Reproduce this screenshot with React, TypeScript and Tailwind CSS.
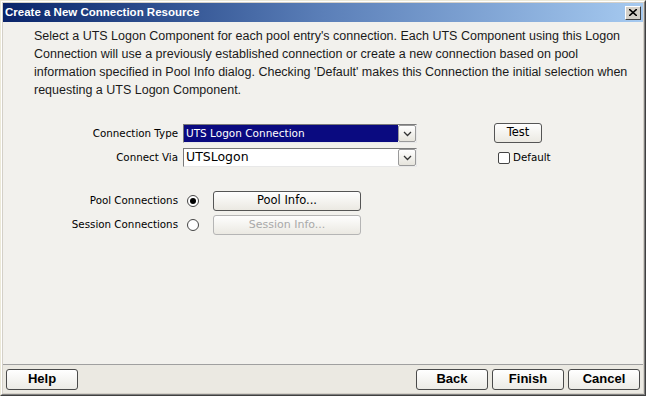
import React from "react";

const sans = "font-['DejaVu_Sans',sans-serif]";
const arial = "font-['Liberation_Sans',Arial,sans-serif]";

function Chevron() {
  return (
    <svg width="9" height="6" viewBox="0 0 9 6" className="block">
      <path d="M1 1 L4.5 4.5 L8 1" stroke="#333" strokeWidth="1.3" fill="none" />
    </svg>
  );
}

interface ComboProps {
  value: string;
  selected?: boolean;
  large?: boolean;
}

function Combo({ value, selected, large }: ComboProps) {
  return (
    <div className="flex h-[19px] w-[234px] border-t border-l border-[#7b7b7b] border-r border-b border-r-[#e8e8e8] border-b-[#e8e8e8] bg-white">
      <div
        className={`flex flex-1 items-center pl-[2px] ${sans} ${large ? "text-[12.5px]" : "text-[10.5px]"} ${
          selected ? "bg-[#0a0a80] text-white" : "bg-white text-black"
        }`}
      >
        {value}
      </div>
      <div className="flex w-[18px] items-center justify-center rounded-[2px] border border-[#9a9a9a] bg-gradient-to-b from-white to-[#e6e4dc]">
        <Chevron />
      </div>
    </div>
  );
}

function Button({
  label,
  className,
  disabled,
}: {
  label: string;
  className: string;
  disabled?: boolean;
}) {
  return (
    <div
      className={`flex items-center justify-center rounded-[3px] border ${
        disabled ? "border-[#b5b5b5] text-[#a9a9a9]" : "border-[#555] text-black"
      } bg-gradient-to-b from-[#fefefe] to-[#ebe9e2] ${sans} ${className}`}
    >
      {label}
    </div>
  );
}

function FooterButton({ label }: { label: string }) {
  return (
    <div
      className={`flex h-[21px] w-[72px] items-center justify-center rounded-[3px] border border-[#4a4a4a] bg-gradient-to-b from-white to-[#ecebe6] ${arial} text-[13px] font-bold text-black`}
    >
      {label}
    </div>
  );
}

export default function App() {
  return (
    <div className="flex h-[396px] w-[646px] flex-col border-l border-t border-r border-b border-l-[#ece9d8] border-t-[#ece9d8] border-r-[#404040] border-b-[#404040] bg-[#d4d0c8]">
      <div className="flex flex-1 flex-col border border-l-white border-t-white border-r-[#808080] border-b-[#808080] p-px">
        {/* title bar */}
        <div className="flex h-[19px] items-center justify-between bg-gradient-to-r from-[#0a246a] via-[#5b7fb8] to-[#a6caf0] pl-[2px] pr-[2px]">
          <span className={`${arial} text-[11.5px] font-bold text-white`}>Create a New Connection Resource</span>
          <div className="flex h-[14px] w-[16px] items-center justify-center border border-l-white border-t-white border-r-[#404040] border-b-[#404040] bg-[#d4d0c8]">
            <svg width="8" height="7" viewBox="0 0 8 7">
              <path d="M0 0 L8 7 M8 0 L0 7" stroke="#000" strokeWidth="1.6" />
            </svg>
          </div>
        </div>

        {/* body */}
        <div className="flex flex-1 flex-col border-b border-[#a0a0a0] bg-[#f2f1ed] pl-[31px] pt-[5px]">
          <p className={`${arial} text-[12.5px] leading-[18px] text-[#1a1a1a]`}>
            <span className="block">
              Select a UTS Logon Component for each pool entry's connection. Each UTS Component using this Logon
            </span>
            <span className="block">
              Connection will use a previously established connection or create a new connection based on pool
            </span>
            <span className="block">
              information specified in Pool Info dialog. Checking 'Default' makes this Connection the initial selection when
            </span>
            <span className="block">requesting a UTS Logon Component.</span>
          </p>

          <div className={`mt-[25px] flex ${sans} text-[10.3px] text-black`}>
            <div className="flex w-[144px] flex-col items-end gap-[5px]">
              <div className="flex h-[19px] items-center">Connection Type</div>
              <div className="flex h-[19px] items-center">Connect Via</div>
            </div>
            <div className="ml-[5px] flex flex-col gap-[5px]">
              <Combo value="UTS Logon Connection" selected />
              <Combo value="UTSLogon" large />
            </div>
            <div className="ml-[77px] -mt-[1px] flex flex-col gap-[5px]">
              <Button label="Test" className="h-[20px] w-[48px] text-[11.5px]" />
              <div className="flex h-[19px] items-center gap-[3px] pl-[4px]">
                <div className="h-[12px] w-[12px] rounded-[2px] border border-[#444] bg-white" />
                <span>Default</span>
              </div>
            </div>
          </div>

          <div className={`mt-[24px] flex flex-col gap-[4px] ${sans} text-[10.3px] text-black`}>
            <div className="flex items-center">
              <div className="w-[144px] text-right">Pool Connections</div>
              <div className="ml-[9px] flex h-[12px] w-[12px] items-center justify-center rounded-full border border-[#444] bg-white">
                <div className="h-[6px] w-[6px] rounded-full bg-black" />
              </div>
              <Button label="Pool Info..." className="ml-[14px] h-[20px] w-[148px] text-[11.5px]" />
            </div>
            <div className="flex items-center">
              <div className="w-[144px] text-right">Session Connections</div>
              <div className="ml-[9px] h-[12px] w-[12px] rounded-full border border-[#444] bg-white" />
              <Button label="Session Info..." disabled className="ml-[14px] h-[20px] w-[148px] text-[11px]" />
            </div>
          </div>
        </div>

        {/* footer */}
        <div className="flex h-[28px] items-center justify-between bg-[#ebe9e2] px-[3px]">
          <FooterButton label="Help" />
          <div className="flex gap-[4px]">
            <FooterButton label="Back" />
            <FooterButton label="Finish" />
            <FooterButton label="Cancel" />
          </div>
        </div>
      </div>
    </div>
  );
}
